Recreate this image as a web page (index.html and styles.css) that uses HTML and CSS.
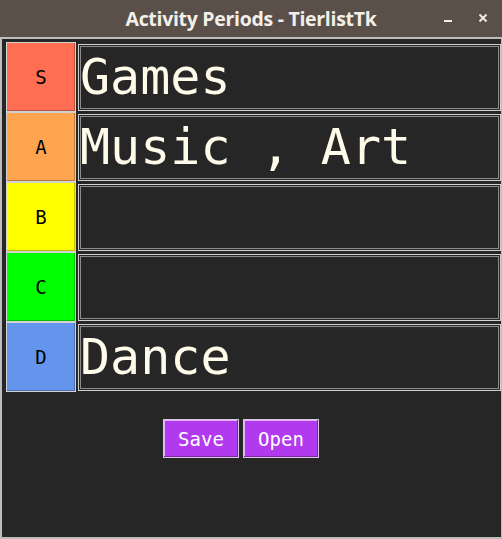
FILE: index.html
```html
<!DOCTYPE html>
<html>
<head>
<meta charset="utf-8">
<link rel="stylesheet" href="styles.css">
</head>
<body>
<div class="window">
  <div class="titlebar">
    <span class="title">Activity Periods - TierlistTk</span>
    <div class="controls">
      <svg class="ctl" width="10" height="10" viewBox="0 0 10 10"><rect x="1" y="7" width="8" height="2" fill="#f2efea"/></svg>
      <svg class="ctl" width="10" height="10" viewBox="0 0 10 10"><path d="M1.5 1.5 L8.5 8.5 M8.5 1.5 L1.5 8.5" stroke="#f2efea" stroke-width="1.8" fill="none"/></svg>
    </div>
  </div>
  <div class="client">
    <div class="tiers">
      <div class="label tier-s">S</div><div class="entry">Games</div>
      <div class="label tier-a">A</div><div class="entry">Music , Art</div>
      <div class="label tier-b">B</div><div class="entry"></div>
      <div class="label tier-c">C</div><div class="entry"></div>
      <div class="label tier-d">D</div><div class="entry">Dance</div>
    </div>
    <div class="actions">
      <button class="btn">Save</button>
      <button class="btn">Open</button>
    </div>
  </div>
</div>
</body>
</html>
```
FILE: styles.css
```css
html, body {
  margin: 0;
  padding: 0;
  background: #262626;
}
.window {
  width: 502px;
  height: 539px;
  display: flex;
  flex-direction: column;
  background: #5a5049;
  overflow: hidden;
}
.titlebar {
  height: 37px;
  flex: none;
  position: relative;
  display: flex;
  align-items: center;
  justify-content: center;
  background: #5a5049;
}
.title {
  font-family: "Open Sans", "Noto Sans", sans-serif;
  font-weight: 700;
  font-size: 19.5px;
  color: #f2efea;
  letter-spacing: -0.3px;
  margin-top: -1px;
}
.controls {
  position: absolute;
  right: 14px;
  top: 13px;
  display: flex;
  gap: 25px;
}
.ctl { display: block; }
.client {
  flex: 1;
  background: #262626;
  border-style: solid;
  border-color: #bdbdbd;
  border-width: 2px 1px 2px 2px;
  padding: 3px 0 0 4px;
}
.tiers {
  display: grid;
  grid-template-columns: 70px 1fr;
  grid-auto-rows: 70px;
  column-gap: 2px;
}
.label {
  box-sizing: border-box;
  border: 1px solid #d2d2d2;
  box-shadow: inset -1px -1px 0 rgba(0,0,0,0.25);
  display: flex;
  align-items: center;
  justify-content: center;
  font-family: "DejaVu Sans Mono", monospace;
  font-size: 19px;
  color: #000;
}
.tier-s { background: #ff6e52; }
.tier-a { background: #ffa54f; }
.tier-b { background: #ffff00; }
.tier-c { background: #00ff00; }
.tier-d { background: #6495ed; }
.entry {
  box-sizing: border-box;
  margin: 2px 0 1px;
  border: 1px solid #d0d0d0;
  box-shadow: inset 0 0 0 1px #262626, inset 0 0 0 2px #8c8c8c;
  background: #262626;
  font-family: "DejaVu Sans Mono", monospace;
  font-size: 50px;
  color: #fffbea;
  padding: 3px 0 0 1px;
  white-space: pre;
  overflow: hidden;
  line-height: 58px;
}
.actions {
  display: flex;
  gap: 4px;
  margin-top: 27px;
  padding-left: 157px;
}
.btn {
  box-sizing: border-box;
  width: 76px;
  height: 39px;
  margin: 0;
  padding: 0;
  background: #b23aee;
  border: 1px solid #dcc6e6;
  box-shadow: inset -1px -1px 0 #7a2aa0, inset 1px 1px 0 #e2b0f6;
  font-family: "DejaVu Sans Mono", monospace;
  font-size: 19px;
  color: #ffffff;
}
```
